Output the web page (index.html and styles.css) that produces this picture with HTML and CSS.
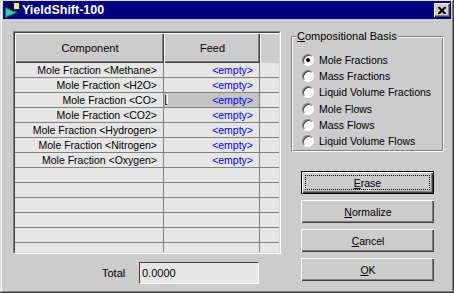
FILE: index.html
```html
<!DOCTYPE html>
<html>
<head>
<meta charset="utf-8">
<link rel="stylesheet" href="styles.css">
</head>
<body>
<div class="window">
  <div class="titlebar">
    <svg class="appicon" width="16" height="16" viewBox="0 0 16 16">
      <polygon points="1,5 14,10.5 1,16" fill="#1a9a9a" stroke="#003c3c" stroke-width="1"/>
      <polygon points="2,7 11,10.5 2,14" fill="#40c8c0"/>
      <rect x="9.5" y="0.5" width="6" height="7" fill="#e8e8a8" stroke="#202000"/>
      <line x1="2" y1="1" x2="10" y2="9" stroke="#000" stroke-width="1.2"/>
    </svg>
    <span class="title">YieldShift-100</span>
    <div class="close">
      <svg width="8" height="7" viewBox="0 0 8 7"><path d="M0 0h2l2 2 2-2h2v1l-2.5 2.5L8 6v1H6L4 5 2 7H0V6l2.5-2.5L0 1z" fill="#000"/></svg>
    </div>
  </div>
  <div class="content">
    <div class="left">
      <div class="grid">
        <div class="grid-inner">
          <div class="ghead">
            <div class="hc hc1">Component</div>
            <div class="hc hc2">Feed</div>
            <div class="hc hc3"></div>
          </div>
          <div class="gbody">
            <div class="row"><div class="cell c1">Mole Fraction &lt;Methane&gt;</div><div class="cell c2">&lt;empty&gt;</div><div class="cell c3"></div></div>
            <div class="row"><div class="cell c1">Mole Fraction &lt;H2O&gt;</div><div class="cell c2">&lt;empty&gt;</div><div class="cell c3"></div></div>
            <div class="row"><div class="cell c1">Mole Fraction &lt;CO&gt;</div><div class="cell c2 sel"><span class="caret"></span>&lt;empty&gt;</div><div class="cell c3"></div></div>
            <div class="row"><div class="cell c1">Mole Fraction &lt;CO2&gt;</div><div class="cell c2">&lt;empty&gt;</div><div class="cell c3"></div></div>
            <div class="row"><div class="cell c1">Mole Fraction &lt;Hydrogen&gt;</div><div class="cell c2">&lt;empty&gt;</div><div class="cell c3"></div></div>
            <div class="row"><div class="cell c1">Mole Fraction &lt;Nitrogen&gt;</div><div class="cell c2">&lt;empty&gt;</div><div class="cell c3"></div></div>
            <div class="row"><div class="cell c1">Mole Fraction &lt;Oxygen&gt;</div><div class="cell c2">&lt;empty&gt;</div><div class="cell c3"></div></div>
            <div class="row"><div class="cell c1"></div><div class="cell c2"></div><div class="cell c3"></div></div>
            <div class="row"><div class="cell c1"></div><div class="cell c2"></div><div class="cell c3"></div></div>
            <div class="row"><div class="cell c1"></div><div class="cell c2"></div><div class="cell c3"></div></div>
            <div class="row"><div class="cell c1"></div><div class="cell c2"></div><div class="cell c3"></div></div>
            <div class="row"><div class="cell c1"></div><div class="cell c2"></div><div class="cell c3"></div></div>
            <div class="row"><div class="cell c1"></div><div class="cell c2"></div><div class="cell c3"></div></div>
          </div>
        </div>
      </div>
      <div class="totalrow">
        <span class="total-label">Total</span>
        <div class="tbox">0.0000</div>
      </div>
    </div>
    <div class="right">
      <fieldset class="group">
        <legend><u>C</u>ompositional Basis</legend>
        <div class="opt"><span class="radio on"></span>Mole Fractions</div>
        <div class="opt"><span class="radio"></span>Mass Fractions</div>
        <div class="opt"><span class="radio"></span>Liquid Volume Fractions</div>
        <div class="opt"><span class="radio"></span>Mole Flows</div>
        <div class="opt"><span class="radio"></span>Mass Flows</div>
        <div class="opt"><span class="radio"></span>Liquid Volume Flows</div>
      </fieldset>
      <div class="buttons">
        <div class="btn default"><span class="focus"><u>E</u>rase</span></div>
        <div class="btn"><u>N</u>ormalize</div>
        <div class="btn"><u>C</u>ancel</div>
        <div class="btn"><u>O</u>K</div>
      </div>
    </div>
  </div>
</div>
</body>
</html>
```

FILE: styles.css
```css
* { box-sizing: border-box; }
html, body { margin: 0; padding: 0; }
body {
  font-family: "Liberation Sans", Arial, sans-serif;
  font-size: 10.5px;
  color: #000;
  background: #cccccc;
}
.window {
  width: 454px;
  height: 293px;
  background: #cccccc;
  padding: 1px 3px 3px 3px;
  display: flex;
  flex-direction: column;
  box-shadow: inset -1px -1px #404040, inset 1px 1px #dcdcdc, inset -2px -2px #808080, inset 2px 2px #ffffff;
}
.titlebar {
  height: 18px;
  background: #000080;
  display: flex;
  align-items: center;
  padding: 0 1px;
  flex: none;
}
.appicon { display: block; }
.title {
  color: #fff;
  font-weight: bold;
  font-size: 12.5px;
  margin-left: 2px;
}
.close {
  margin-left: auto;
  width: 16px;
  height: 14px;
  background: #cccccc;
  border-top: 1px solid #fff;
  border-left: 1px solid #fff;
  box-shadow: inset -1px -1px #404040, inset -2px -2px #808080;
  display: flex;
  align-items: center;
  justify-content: center;
  padding: 0 1px 1px 0;
}
.close svg { display: block; }
.content {
  flex: 1;
  display: flex;
  gap: 10px;
  padding: 12px 7px 0 10px;
}
.left {
  width: 268px;
  display: flex;
  flex-direction: column;
}
.grid {
  height: 223px;
  border: 1px solid;
  border-color: #808080 #ffffff #ffffff #808080;
}
.grid-inner {
  height: 100%;
  border: 1px solid;
  border-color: #404040 #d8d8d8 #d8d8d8 #404040;
  background: #e6e6e6;
  overflow: hidden;
}
.ghead {
  display: flex;
  height: 30px;
}
.hc {
  background: #cccccc;
  border-top: 1px solid #fff;
  border-left: 1px solid #fff;
  box-shadow: inset -1px -1px #404040, inset -2px -2px #808080;
  display: flex;
  align-items: center;
  justify-content: center;
  padding-bottom: 1px;
  font-size: 11px;
}
.hc1 { width: 149px; }
.hc2 { width: 96px; }
.hc3 { width: 19px; box-shadow: none; }
.row {
  display: flex;
  height: 15px;
  border-bottom: 1px solid #808080;
}
.cell {
  height: 14px;
  line-height: 14px;
  white-space: nowrap;
}
.c1 {
  width: 149px;
  border-right: 1px solid #808080;
  text-align: right;
  padding-right: 6px;
}
.c2 {
  width: 96px;
  border-right: 1px solid #808080;
  padding-right: 6px;
  color: #0000ff;
  display: flex;
  justify-content: flex-end;
}
.c2.sel {
  background: #c4c4c4;
}
.caret {
  width: 3px;
  height: 11px;
  margin: 1px auto 0 1px;
  border-left: 1px solid #404040;
  border-bottom: 1px solid #404040;
  border-top: 1px solid #fff;
  border-right: 1px solid #fff;
}
.c3 { width: 19px; }
.totalrow {
  display: flex;
  align-items: center;
  margin-top: 8px;
}
.total-label {
  margin-left: 89px;
  width: 37px;
  font-size: 11px;
}
.tbox {
  width: 120px;
  height: 22px;
  background: #e6e6e6;
  border: 1px solid;
  border-color: #404040 #ffffff #ffffff #404040;
  padding: 3px 2px;
  line-height: 14px;
  font-size: 11px;
}
.right {
  flex: 1;
  display: flex;
  flex-direction: column;
}
.group {
  margin: -1px 0 0 0;
  padding: 9px 0 2px 10px;
  min-width: 0;
  border: 1px solid;
  border-color: #808080 #ffffff #ffffff #808080;
  box-shadow: inset 1px 1px #ffffff, inset -1px -1px #808080;
}
.group legend {
  padding: 0 1px;
  margin-left: -6px;
  line-height: 13px;
  background: #cccccc;
  font-size: 11px;
}
.opt {
  display: flex;
  align-items: center;
  height: 16.2px;
}
.radio {
  width: 12px;
  height: 12px;
  border-radius: 50%;
  background: #ffffff;
  border: 1px solid;
  border-color: #808080 #ffffff #ffffff #808080;
  box-shadow: inset 1px 1px #404040;
  margin-right: 5px;
  position: relative;
  flex: none;
}
.radio.on::after {
  content: "";
  position: absolute;
  left: 3px;
  top: 3px;
  width: 4px;
  height: 4px;
  border-radius: 50%;
  background: #000;
}
.buttons {
  display: flex;
  flex-direction: column;
  gap: 6px;
  margin-top: 19px;
  padding: 0 10px;
}
.btn {
  height: 23px;
  background: #cccccc;
  border-top: 1px solid #fff;
  border-left: 1px solid #fff;
  box-shadow: inset -1px -1px #404040, inset -2px -2px #808080;
  display: flex;
  align-items: center;
  justify-content: center;
  padding-bottom: 1px;
}
.btn.default {
  border: 1px solid #000;
  box-shadow: inset 1px 1px #fff, inset -1px -1px #404040, inset -2px -2px #808080;
  padding: 3px;
}
.focus {
  flex: 1;
  align-self: stretch;
  border: 1px dotted #000;
  display: flex;
  align-items: center;
  justify-content: center;
}
```
